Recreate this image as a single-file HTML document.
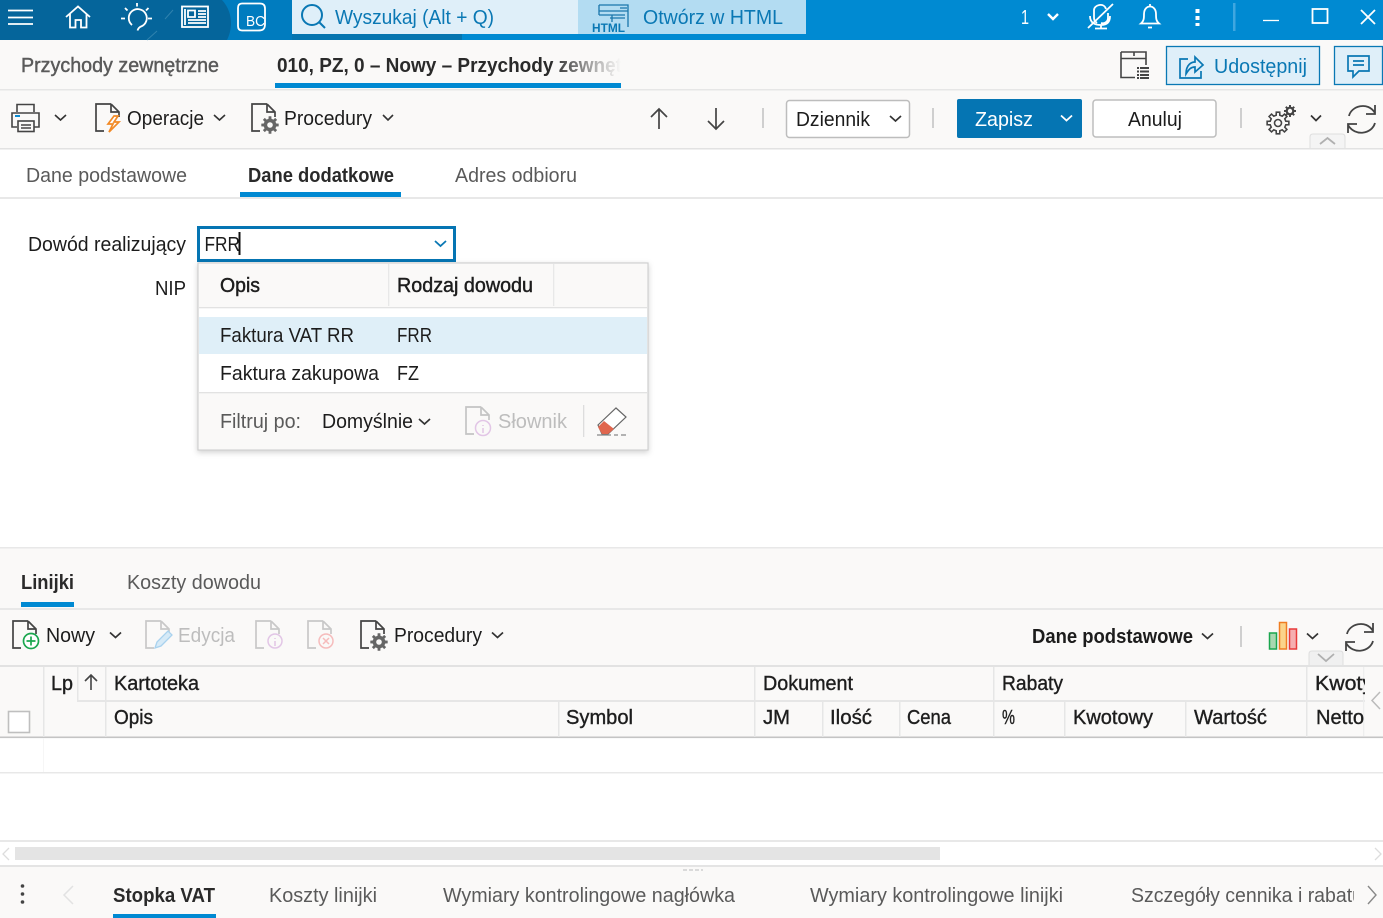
<!DOCTYPE html>
<html lang="pl"><head><meta charset="utf-8"><title>Przychody zewnętrzne</title>
<style>
html,body{margin:0;padding:0;width:1383px;height:918px;overflow:hidden;background:#fff}
svg{display:block;font-family:"Liberation Sans",sans-serif;font-size:20px}
text{fill:#1c1c1c}
.m{stroke:#222;stroke-width:.45px}
.b{font-weight:bold}
.g{fill:#5a5a5a}
.d{fill:#bdbdbd}
.w{fill:#fff}
.l{fill:#0a78b4}
.t{fill:none;stroke:#fff;stroke-width:1.8}
.c{fill:none;stroke:#333;stroke-width:1.7}
</style></head><body>
<svg width="1383" height="918" viewBox="0 0 1383 918" xmlns="http://www.w3.org/2000/svg">
<defs>
<linearGradient id="f" x1="0" x2="1"><stop offset="0" stop-color="#faf9f8" stop-opacity="0"/><stop offset="1" stop-color="#faf9f8"/></linearGradient>
<clipPath id="k1"><rect x="1308" y="668" width="57" height="32"/></clipPath>
<clipPath id="k2"><rect x="270" y="45" width="351" height="36"/></clipPath>
<clipPath id="k3"><rect x="1120" y="875" width="234" height="38"/></clipPath>
<g id="doc"><path d="M17 0H2V27H10M17 0L25 8V13M17 0V8H25" fill="none" stroke-width="1.7"/></g>
<path id="gp" d="M10.86-1.72L10.86 1.72 7.8 1.8 6.78 4.24 8.9 6.47 6.47 8.9 4.24 6.78 1.8 7.8 1.72 10.86-1.72 10.86-1.8 7.8-4.24 6.78-6.47 8.9-8.9 6.47-6.78 4.24-7.8 1.8-10.86 1.72-10.86-1.72-7.8-1.8-6.78-4.24-8.9-6.47-6.47-8.9-4.24-6.78-1.8-7.8-1.72-10.86 1.72-10.86 1.8-7.8 4.24-6.78 6.47-8.9 8.9-6.47 6.78-4.24 7.8-1.8Z"/>
<g id="gear"><use href="#gp" transform="scale(.8)" fill="#666"/><circle r="2.8" fill="#faf9f8"/></g>
<path id="ref" d="M3 13C5 3 22-2 29 10M29 2V11H20M29 20C26 31 9 34 2 22M2 30V21H11" fill="none" stroke="#444" stroke-width="1.8"/>
</defs>

<!-- backgrounds -->
<rect width="1383" height="918" fill="#fff"/>
<rect y="40" width="1383" height="108" fill="#faf9f8"/>
<rect y="89" width="1383" height="1.5" fill="#e6e6e6"/>
<rect y="148" width="1383" height="1.5" fill="#e2e2e2"/>
<rect y="197" width="1383" height="2" fill="#e8e8e8"/>
<rect y="547" width="1383" height="119" fill="#faf9f8"/>
<rect y="547" width="1383" height="1.5" fill="#e8e8e8"/>
<rect y="608" width="1383" height="2" fill="#e8e8e8"/>
<rect y="665" width="1383" height="2" fill="#e2e2e2"/>
<rect y="667" width="1383" height="70" fill="#faf9f8"/>
<rect y="736.5" width="1383" height="1.6" fill="#c4c4c4"/>
<rect y="772" width="1383" height="1.5" fill="#e8e8e8"/>
<rect x="43" y="738" width="1" height="34" fill="#f6f6f6"/>
<rect y="840" width="1383" height="2" fill="#e8e8e8"/>
<rect x="15" y="847" width="925" height="13" fill="#e4e4e4"/>
<rect y="866" width="1383" height="52" fill="#faf9f8"/>
<rect y="865" width="1383" height="2" fill="#e4e4e4"/>

<!-- top bar -->
<rect width="1383" height="40" fill="#008ad2"/>
<rect width="292" height="40" fill="#007cbf"/>
<path d="M0 0H222C233 12 233 28 227 40H0Z" fill="#05659b"/>
<rect x="292" width="286" height="34" fill="#dfeff9"/>
<rect x="578" width="228" height="34" fill="#b3dcf2"/>
<rect x="292" y="34" width="170" height="6" fill="#0575b0"/>
<path d="M8 10.500H33M8 17.500H33M8 24H33" class="t" stroke-width="1.3"/>
<path d="M66 17L78 6.500L90 17M70 14V27.500H75.500V20H81V27.500H86.500V14" class="t"/>
<path d="M132 25A9 9 0 1 1 141 26.500Q138.500 27.500 137.500 30.500M137 3V6.500M121 18.500H125M148 18.500H152M125 8L127.500 10.500M148.500 8L146 10.500" class="t"/>
<path d="M165 19L173 10M147 40L157 31" stroke="#2f82ae" stroke-width="1"/>
<rect x="182" y="6.500" width="26" height="20.500" class="t"/>
<path d="M185 9V25M188 10.500H195V17H188ZM198 11H206M198 14H206M198 17H206M188 20H206M188 23H206" class="t" stroke-width="1.3"/>
<path d="M242 3.500H260Q265 3.500 265 8.500V24C265 30 262 30.500 258 30.500H242Q238 30.500 238 26V8Q238 3.500 242 3.500Z" class="t"/>
<text x="246" y="26" style="font-size:15px" class="w" textLength="19" lengthAdjust="spacingAndGlyphs">BC</text>
<circle cx="312" cy="15" r="10" fill="none" stroke="#0a78b4" stroke-width="2"/><path d="M319 22L325 28" stroke="#0a78b4" stroke-width="2"/>
<text x="335" y="24" class="l" textLength="159" lengthAdjust="spacingAndGlyphs">Wyszukaj (Alt + Q)</text>
<path d="M599 5H628V27M599 5V15M599 11H628M599 15H625M612 15V22M610 18H625M620 8H627" fill="none" stroke="#1a76ab" stroke-width="1.3"/>
<text x="592" y="32" style="font-size:12px;font-weight:bold" class="l" textLength="33" lengthAdjust="spacingAndGlyphs">HTML</text>
<text x="643" y="24" class="l" textLength="140" lengthAdjust="spacingAndGlyphs">Otwórz w HTML</text>
<text x="1021" y="24" class="w" textLength="8" lengthAdjust="spacingAndGlyphs">1</text>
<path d="M1048 14L1053 19L1058 14" fill="none" stroke="#fff" stroke-width="2.4"/>
<path d="M1088 28L1113 4M1097 23C1094 21 1094 19 1094 17V10C1094 5 1104 2 1106 9M1108 13V18C1108 22 1104 24 1101 23M1090 16C1090 23 1095 25 1101 25C1106 25 1110 23 1110 16M1101 25V28M1095 28.500H1107" class="t" stroke-width="1.4"/>
<path d="M1141 23.500H1159C1156 21 1156 18 1156 14C1156 4 1144 4 1144 14C1144 18 1144 21 1141 23.500ZM1148 27.500H1152M1150 4V6" class="t" stroke-width="1.6"/>
<rect x="1195.500" y="9" width="4" height="4" fill="#fff"/><rect x="1195.500" y="16" width="4" height="4" fill="#fff"/><rect x="1195.500" y="23" width="4" height="3" fill="#fff"/>
<rect x="1233" y="3" width="2.500" height="28" fill="#3fa7e0"/>
<path d="M1263 20.500H1279" stroke="#fff" stroke-width="1.300"/>
<rect x="1312.500" y="9" width="15" height="14" class="t" stroke-width="1.800"/>
<path d="M1361 10L1375 24M1375 10L1361 24" class="t" stroke-width="1.500"/>

<!-- second row -->
<text x="21" y="72" class="g m" style="stroke:#5a5a5a" textLength="198" lengthAdjust="spacingAndGlyphs">Przychody zewnętrzne</text>
<g clip-path="url(#k2)"><text x="277" y="72" class="b" style="fill:#2a2a2a" textLength="384" lengthAdjust="spacingAndGlyphs">010, PZ, 0 – Nowy – Przychody zewnętrzne</text></g>
<rect x="550" y="45" width="71" height="36" fill="url(#f)"/>
<rect x="275" y="83" width="346" height="5" fill="#0089d2"/>
<path d="M1121 52V77.500H1135M1121 52H1146V65M1121 58.500H1146M1134 52V56" fill="none" stroke="#444" stroke-width="1.600"/>
<path d="M1137 68H1149M1137 71.500H1149M1137 75H1149M1137 78H1149" stroke="#444" stroke-width="2" stroke-dasharray="2 1 9 0"/>
<rect x="1166.500" y="46.500" width="153" height="38" fill="#dfeff9" stroke="#0a78b4" stroke-width="1.300"/>
<path d="M1188 59H1180V78H1201V71M1186 74C1186 64 1192 62 1195 62V57L1203 65L1195 72V67C1191 67 1189 69 1186 74Z" fill="none" stroke="#0a78b4" stroke-width="1.700"/>
<text x="1214" y="73" class="l" textLength="93" lengthAdjust="spacingAndGlyphs">Udostępnij</text>
<rect x="1334.500" y="46.500" width="48" height="38" fill="#dfeff9" stroke="#0a78b4" stroke-width="1.300"/>
<path d="M1348 56H1369V71H1359L1353 77V71H1348ZM1353 61H1364M1353 65H1364" fill="none" stroke="#0a78b4" stroke-width="1.700"/>

<!-- toolbar -->
<g fill="none" stroke="#444" stroke-width="1.600">
<path d="M17 112V104.500H34V112M17 127H12V113H39V127H34"/><rect x="18" y="121" width="16" height="10.500"/><path d="M21 125H31M21 128H31"/>
</g><rect x="15" y="115" width="5" height="2" fill="#0a8ad2"/>
<path d="M55 115L60.500 120L66 115M214 115L219.500 120L225 115M383 115L388 120L393 115" fill="none" stroke="#333" stroke-width="1.600"/>
<g transform="translate(94,104)" stroke="#444"><use href="#doc"/></g>
<path d="M114 116L108 124H113L109 132L119 122H114L118 116Z" fill="#fff" stroke="#f28a26" stroke-width="1.700"/>
<text x="127" y="125" textLength="77" lengthAdjust="spacingAndGlyphs">Operacje</text>
<g transform="translate(250,104)" stroke="#444"><use href="#doc"/></g>
<use href="#gear" x="270" y="125"/>
<text x="284" y="125" textLength="88" lengthAdjust="spacingAndGlyphs">Procedury</text>
<path d="M659 129V109M651 117L659 109L667 117M716 108V129M708 121L716 129L724 121" fill="none" stroke="#444" stroke-width="1.700"/>
<rect x="762" y="108" width="2" height="20" fill="#cfcfcf"/>
<rect x="786.500" y="100.500" width="123" height="37" rx="3" fill="#fff" stroke="#bdbdbd" stroke-width="1.500"/>
<text x="796" y="126" textLength="74" lengthAdjust="spacingAndGlyphs">Dziennik</text>
<path d="M890 116L895.500 121L901 116" class="c"/>
<rect x="932" y="108" width="2" height="20" fill="#cfcfcf"/>
<rect x="957" y="99" width="125" height="39" rx="2" fill="#0575b3"/>
<text x="975" y="126" class="w" textLength="58" lengthAdjust="spacingAndGlyphs">Zapisz</text>
<path d="M1061 115.500L1066.500 120.500L1072 115.500" class="t" stroke-width="1.500"/>
<rect x="1093" y="100" width="123" height="37" rx="3" fill="#fff" stroke="#bdbdbd" stroke-width="1.500"/>
<text x="1128" y="126" textLength="54" lengthAdjust="spacingAndGlyphs">Anuluj</text>
<rect x="1240" y="108" width="2" height="20" fill="#cfcfcf"/>
<use href="#gp" transform="translate(1278,123)" fill="#faf9f8" stroke="#444" stroke-width="1.600"/>
<circle cx="1278" cy="123" r="3.500" fill="none" stroke="#444" stroke-width="1.600"/>
<use href="#gp" transform="translate(1290,111) scale(.55)" fill="#444"/>
<circle cx="1290" cy="111" r="2.200" fill="#faf9f8"/>
<path d="M1311 115.500L1316 120.500L1321 115.500" class="c" stroke="#222"/>
<use href="#ref" x="1346" y="103"/>
<path d="M1310 148V137Q1310 134 1313 134H1342Q1345 134 1345 137V148" fill="#f4f4f4" stroke="#dedede"/>
<path d="M1320 144L1327.500 138L1335 144" fill="none" stroke="#b0b0b0" stroke-width="1.800"/>

<!-- tabs -->
<text x="26" y="182" class="g" textLength="161" lengthAdjust="spacingAndGlyphs">Dane podstawowe</text>
<text x="248" y="182" class="b" style="fill:#2a2a2a" textLength="146" lengthAdjust="spacingAndGlyphs">Dane dodatkowe</text>
<rect x="240" y="192" width="161" height="5" fill="#0089d2"/>
<text x="455" y="182" class="g" textLength="122" lengthAdjust="spacingAndGlyphs">Adres odbioru</text>

<!-- form -->
<text x="28" y="251" textLength="158" lengthAdjust="spacingAndGlyphs">Dowód realizujący</text>
<text x="155" y="295" textLength="31" lengthAdjust="spacingAndGlyphs">NIP</text>
<rect x="198.500" y="227.500" width="256" height="33" fill="#fff" stroke="#0575b3" stroke-width="3"/>
<text x="204.500" y="251" textLength="35.500" lengthAdjust="spacingAndGlyphs">FRR</text>
<rect x="238.500" y="232" width="2" height="23" fill="#111"/>
<path d="M435 241L440.500 246L446 241" fill="none" stroke="#0a78b4" stroke-width="1.800"/>

<!-- dropdown -->
<rect x="198" y="263" width="450" height="187" fill="#fff" stroke="#cfcfcf" stroke-width="1.200" style="filter:drop-shadow(0 2px 3px rgba(0,0,0,.18))"/>
<rect x="199" y="264" width="448" height="43" fill="#faf9f8"/>
<rect x="199" y="307" width="448" height="1.300" fill="#e2e2e2"/>
<rect x="388" y="264" width="1.300" height="42" fill="#e8e8e8"/>
<rect x="553" y="264" width="1.300" height="42" fill="#e8e8e8"/>
<text x="220" y="292" class="m" textLength="40" lengthAdjust="spacingAndGlyphs">Opis</text>
<text x="397" y="292" class="m" textLength="136" lengthAdjust="spacingAndGlyphs">Rodzaj dowodu</text>
<rect x="199" y="317" width="448" height="37" fill="#dfeff8"/>
<text x="220" y="342" textLength="134" lengthAdjust="spacingAndGlyphs">Faktura VAT RR</text>
<text x="397" y="342" textLength="35" lengthAdjust="spacingAndGlyphs">FRR</text>
<text x="220" y="380" textLength="159" lengthAdjust="spacingAndGlyphs">Faktura zakupowa</text>
<text x="397" y="380" textLength="22" lengthAdjust="spacingAndGlyphs">FZ</text>
<rect x="199" y="392" width="448" height="57" fill="#faf9f8"/>
<rect x="199" y="392" width="448" height="1.300" fill="#e2e2e2"/>
<text x="220" y="428" class="g" textLength="81" lengthAdjust="spacingAndGlyphs">Filtruj po:</text>
<text x="322" y="428" textLength="91" lengthAdjust="spacingAndGlyphs">Domyślnie</text>
<path d="M419 419L424.500 424L430 419" class="c" stroke-width="1.500"/>
<g transform="translate(464,407)" stroke="#c4c4c4"><use href="#doc"/></g>
<circle cx="483" cy="428" r="7.500" fill="#faf9f8" stroke="#e2c6e6" stroke-width="1.500"/><path d="M483 425V426M483 428V433" stroke="#e2c6e6" stroke-width="1.500"/>
<text x="498" y="428" class="d" textLength="69" lengthAdjust="spacingAndGlyphs">Słownik</text>
<rect x="583" y="405" width="1.300" height="32" fill="#ddd"/>
<path d="M598 425L616 408L626 417L608 434H602Z" fill="#fff" stroke="#666" stroke-width="1.200"/>
<path d="M598 427L604 421L614 429L608 434H602Z" fill="#e0664e"/>
<path d="M597 435H611M614 435H618M621 435H626" stroke="#888" stroke-width="1.200"/>

<!-- lines section -->
<text x="21" y="589" class="b" style="fill:#2a2a2a" textLength="53" lengthAdjust="spacingAndGlyphs">Linijki</text>
<rect x="21" y="602" width="53" height="5" fill="#0089d2"/>
<text x="127" y="589" class="g" textLength="134" lengthAdjust="spacingAndGlyphs">Koszty dowodu</text>

<g transform="translate(11,621)" stroke="#444"><use href="#doc"/></g>
<circle cx="31" cy="641" r="7.500" fill="#fff" stroke="#1aa64e" stroke-width="1.700"/><path d="M31 636.500V645.500M26.500 641H35.500" stroke="#1aa64e" stroke-width="1.700"/>
<text x="46" y="642" textLength="49" lengthAdjust="spacingAndGlyphs">Nowy</text>
<path d="M110 632.500L115.500 637.500L121 632.500M492 632.500L497.500 637.500L503 632.500" class="c" stroke-width="1.600"/>
<g transform="translate(144,621)" stroke="#c8c8c8"><use href="#doc"/></g>
<path d="M155 648L157 642L168 631L172 635L161 646Z" fill="#d6eaf7" stroke="#a9d2ee" stroke-width="1.300"/>
<text x="178" y="642" class="d" textLength="57" lengthAdjust="spacingAndGlyphs">Edycja</text>
<g transform="translate(254,621)" stroke="#c8c8c8"><use href="#doc"/></g>
<circle cx="275" cy="641" r="7" fill="#faf9f8" stroke="#e2c6e6" stroke-width="1.500"/><path d="M275 638V639M275 641V646" stroke="#e2c6e6" stroke-width="1.500"/>
<g transform="translate(306,621)" stroke="#c8c8c8"><use href="#doc"/></g>
<circle cx="326" cy="641" r="7" fill="#faf9f8" stroke="#f6bcbc" stroke-width="1.500"/><path d="M323 638L329 644M329 638L323 644" stroke="#f6bcbc" stroke-width="1.500"/>
<g transform="translate(359,621)" stroke="#444"><use href="#doc"/></g>
<use href="#gear" x="379" y="642"/>
<text x="394" y="642" textLength="88" lengthAdjust="spacingAndGlyphs">Procedury</text>

<text x="1032" y="643" class="b" textLength="161" lengthAdjust="spacingAndGlyphs">Dane podstawowe</text>
<path d="M1202 633.500L1207.500 638.500L1213 633.500" class="c" stroke-width="1.500"/>
<rect x="1240" y="626" width="2" height="21" fill="#cfcfcf"/>
<rect x="1269.500" y="633" width="7" height="16" fill="#a8d8b0" stroke="#1aa64e" stroke-width="1.500"/>
<rect x="1279.500" y="622.500" width="7" height="26.500" fill="#fbd48a" stroke="#ef7d22" stroke-width="1.500"/>
<rect x="1289.500" y="629" width="7" height="20" fill="#f6aeb0" stroke="#e83a3a" stroke-width="1.500"/>
<path d="M1307 633.500L1312.500 638.500L1318 633.500" class="c" stroke="#222"/>
<use href="#ref" x="1344" y="621"/>
<path d="M1309 665V654Q1309 651 1312 651H1340Q1343 651 1343 654V665" fill="#f0f0f0" stroke="#dedede"/>
<path d="M1318 654L1326 661L1334 654" fill="none" stroke="#b0b0b0" stroke-width="1.800"/>

<!-- table header -->
<g fill="#e6e6e6">
<rect x="43" y="667" width="1.500" height="70"/>
<rect x="77" y="667" width="1.500" height="34"/>
<rect x="77" y="700" width="1306" height="2"/>
<rect x="105" y="667" width="1.500" height="70"/>
<rect x="754" y="667" width="1.500" height="70"/>
<rect x="558" y="701" width="1.500" height="36"/>
<rect x="822" y="701" width="1.500" height="36"/>
<rect x="899" y="701" width="1.500" height="36"/>
<rect x="993" y="667" width="1.500" height="70"/>
<rect x="1064" y="701" width="1.500" height="36"/>
<rect x="1185" y="701" width="1.500" height="36"/>
<rect x="1306" y="667" width="1.500" height="70"/>
</g>
<rect x="1365" y="667" width="18" height="69" fill="#faf9f8"/>
<rect x="1363" y="667" width="1.300" height="69" fill="#eee"/>
<path d="M1380 692L1372 700.500L1380 709" fill="none" stroke="#bbb" stroke-width="1.500"/>
<rect x="8.500" y="711.500" width="21" height="21" fill="#fff" stroke="#bfbfbf" stroke-width="1.600"/>
<g class="m" style="stroke:#2a2a2a;stroke-width:.4px">
<text x="51" y="690" textLength="22" lengthAdjust="spacingAndGlyphs">Lp</text>
<text x="114" y="690" textLength="85" lengthAdjust="spacingAndGlyphs">Kartoteka</text>
<text x="763" y="690" textLength="90" lengthAdjust="spacingAndGlyphs">Dokument</text>
<text x="1002" y="690" textLength="61" lengthAdjust="spacingAndGlyphs">Rabaty</text>
<g clip-path="url(#k1)"><text x="1315" y="690" textLength="58" lengthAdjust="spacingAndGlyphs">Kwoty</text></g>
<text x="114" y="724" textLength="39" lengthAdjust="spacingAndGlyphs">Opis</text>
<text x="566" y="724" textLength="67" lengthAdjust="spacingAndGlyphs">Symbol</text>
<text x="763" y="724" textLength="27" lengthAdjust="spacingAndGlyphs">JM</text>
<text x="830" y="724" textLength="42" lengthAdjust="spacingAndGlyphs">Ilość</text>
<text x="907" y="724" textLength="44" lengthAdjust="spacingAndGlyphs">Cena</text>
<text x="1002" y="724" textLength="13" lengthAdjust="spacingAndGlyphs">%</text>
<text x="1073" y="724" textLength="80" lengthAdjust="spacingAndGlyphs">Kwotowy</text>
<text x="1194" y="724" textLength="73" lengthAdjust="spacingAndGlyphs">Wartość</text>
<text x="1316" y="724" textLength="48" lengthAdjust="spacingAndGlyphs">Netto</text>
</g>
<path d="M91 690V675M85 681L91 675L97 681" fill="none" stroke="#444" stroke-width="1.600"/>

<!-- scrollbar arrows -->
<path d="M9 848L3 854L9 860" fill="none" stroke="#ddd" stroke-width="1.300"/>
<path d="M1375 848L1381 854L1375 860" fill="none" stroke="#ddd" stroke-width="1.300"/>
<path d="M683 870H703" stroke="#bbb" stroke-width="1" stroke-dasharray="4 2"/>

<!-- bottom tabs -->
<circle cx="22.500" cy="886" r="1.800" fill="#444"/><circle cx="22.500" cy="894" r="1.800" fill="#444"/><circle cx="22.500" cy="902" r="1.800" fill="#444"/>
<path d="M73 886L64 895L73 904" fill="none" stroke="#e2e2e2" stroke-width="1.500"/>
<text x="113" y="902" class="b" style="fill:#2a2a2a" textLength="102" lengthAdjust="spacingAndGlyphs">Stopka VAT</text>
<rect x="113" y="914" width="103" height="4" fill="#0089d2"/>
<text x="269" y="902" class="g" textLength="108" lengthAdjust="spacingAndGlyphs">Koszty linijki</text>
<text x="443" y="902" class="g" textLength="292" lengthAdjust="spacingAndGlyphs">Wymiary kontrolingowe nagłówka</text>
<text x="810" y="902" class="g" textLength="253" lengthAdjust="spacingAndGlyphs">Wymiary kontrolingowe linijki</text>
<g clip-path="url(#k3)"><text x="1131" y="902" class="g" textLength="232" lengthAdjust="spacingAndGlyphs">Szczegóły cennika i rabatu</text></g>
<path d="M1368 886L1376 895L1368 904" fill="none" stroke="#888" stroke-width="1.400"/>
</svg>
</body></html>
